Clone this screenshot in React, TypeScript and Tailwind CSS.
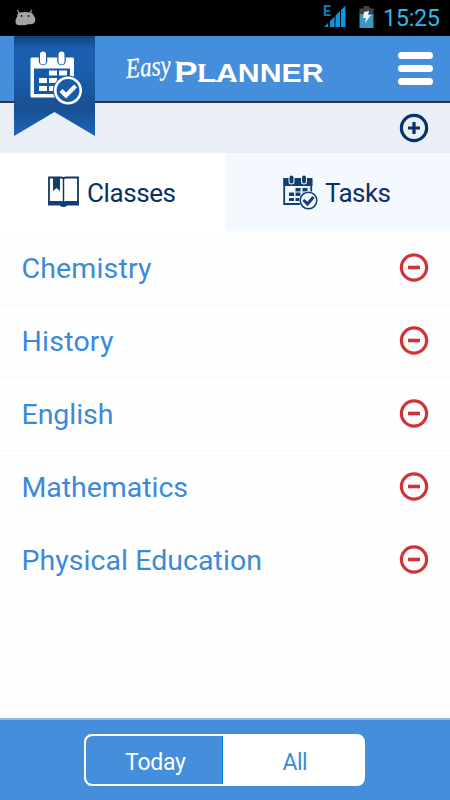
import React from "react";

const subjects = [
  { name: "Chemistry", width: "w-[131px]", length: 130 },
  { name: "History", width: "w-[93px]", length: 92 },
  { name: "English", width: "w-[93px]", length: 92 },
  { name: "Mathematics", width: "w-[167px]", length: 166.5 },
  { name: "Physical Education", width: "w-[241px]", length: 240.5 },
];

function StatusBar() {
  return (
    <div className="flex h-9 shrink-0 items-start justify-between bg-black">
      <svg className="ml-[14px] mt-[9px]" width="23" height="17" viewBox="0 0 23 17" fill="#a3a3a3">
        <path d="M3.500 1 5.500 4.500M18 1l-2 3" stroke="#a3a3a3" strokeWidth="1.200" />
        <path d="M4 4Q11 2 18 4L20 7Q22 9 21 13Q19 16 14.500 15Q11 17 7 16Q2 17 1.500 13Q1 10 3 8Z" />
        <circle cx="7.500" cy="7" r="1" fill="#222" />
        <circle cx="14.500" cy="7" r="1" fill="#222" />
      </svg>
      <div className="flex">
        <svg width="25" height="36" viewBox="0 0 25 36">
          <text x="0" y="16" fontFamily="Roboto, sans-serif" fontSize="14" fontWeight="bold" fill="#087cbd" textLength="8" lengthAdjust="spacingAndGlyphs">E</text>
          <path d="M1 27l4-4v4ZM7 21l4.500-4.500V27H7ZM12.500 15.500l4.500-4.500V27h-4.500ZM18 10l4.500-4.500V27H18Z" fill="#0797e6" />
        </svg>
        <svg className="ml-[11px]" width="16" height="36" viewBox="0 0 16 36">
          <path d="M4.500 6h6v2.500h4V14H.5V8.500h4Z" fill="#454545" />
          <path d="M.5 14h14v14H.5Z" fill="#3798c1" />
          <path d="m5 12 5-1-1 4h3l-6 8 1-5H4Z" fill="#f1f1f1" />
        </svg>
        <svg className="ml-2 mr-2" width="59" height="36">
          <text x="0" y="26.200" textLength="57" fontSize="23.500" fill="#33b5e5" fontFamily="Roboto, sans-serif">15:25</text>
        </svg>
      </div>
    </div>
  );
}

function BannerCalendar() {
  return (
    <svg width="54" height="56" viewBox="0 0 54 56">
      <rect x="2.500" y="7.500" width="43.500" height="40" rx="1.500" fill="#fff" />
      <path d="M6 18.500h36V44H6Z" fill="#165aa8" />
      <path d="M21 20.500h8v5h-8Zm10 0h8v5h-8ZM11 28h8v5h-8Zm10 0h8v5h-8Zm10 0h8v5h-8ZM11 36h8v5h-8Zm10 0h8v5h-8Z" fill="#fff" />
      <path d="M15 5v6M33.500 5v6" stroke="#185ca9" strokeWidth="8.500" strokeLinecap="round" />
      <path d="M15 4.500v7M33.500 4.500v7" stroke="#fff" strokeWidth="6" strokeLinecap="round" />
      <circle cx="40" cy="40.500" r="15" fill="#165aa8" />
      <circle cx="40" cy="40.500" r="12.700" fill="#185ca9" stroke="#fff" strokeWidth="2.600" />
      <path d="m33 40.500 5 5 9.500-9.500" fill="none" stroke="#fff" strokeWidth="4.200" />
    </svg>
  );
}

function Header() {
  return (
    <header className="relative h-[67px] shrink-0 border-b-2 border-[#373544] bg-[#458edc]">
      <div className="flex h-full items-start justify-end">
        <svg width="200" height="65" viewBox="125 36 200 65" fill="#fff" className="mr-[73px]">
          <text x="126" y="76" textLength="45" lengthAdjust="spacingAndGlyphs" fontFamily="'Liberation Serif', serif" fontStyle="italic" fontSize="28" stroke="#fff" strokeWidth=".3" transform="rotate(-5 148 70)">Easy</text>
          <text x="174.500" y="81.500" textLength="23" lengthAdjust="spacingAndGlyphs" fontFamily="'Liberation Sans', sans-serif" fontWeight="bold" fontSize="29">P</text>
          <text x="197.500" y="81.500" textLength="126" lengthAdjust="spacingAndGlyphs" fontFamily="'Liberation Sans', sans-serif" fontWeight="bold" fontSize="25.500">LANNER</text>
          <path d="M175.500 62.200h4M175.500 80.800h8M198 64.800h8M198 80.800h4M215 80.800h7M230 80.800h6" stroke="#fff" strokeWidth="1.200" />
        </svg>
        <button className="mr-[17px] mt-4 flex w-[35px] flex-col gap-[6px]" aria-label="Menu">
          <span className="h-[7px] w-full rounded-full bg-white" />
          <span className="h-[7px] w-full rounded-full bg-white" />
          <span className="h-[7px] w-full rounded-full bg-white" />
        </button>
      </div>
      <div className="absolute left-[14px] top-0 flex h-[100px] w-[81px] justify-center bg-[linear-gradient(180deg,#12427a_0%,#195fae_12%,#195fae_35%,#184f92_72%,#1c66ba_100%)] pt-[14px] [clip-path:polygon(0_0,100%_0,100%_100%,50%_76%,0_100%)]">
        <BannerCalendar />
      </div>
    </header>
  );
}

function CircleIcon({ plus = false }: { plus?: boolean }) {
  return (
    <svg width="30" height="30" viewBox="0 0 30 30" fill="none" stroke={plus ? "#06336b" : "#cf3338"}>
      <circle cx="15" cy={plus ? 15 : 14.5} r="12.600" strokeWidth="3.200" />
      <path d={plus ? "M9 15h12M15 9v12" : "M9 14.500h12"} strokeWidth={plus ? 3.2 : 3.6} />
    </svg>
  );
}

function Tabs() {
  return (
    <div className="flex h-[78px] shrink-0">
      <button className="flex w-[225px] items-start bg-white pl-[47px] pt-[23px]">
        <svg width="33" height="34" viewBox="0 0 33 34" fill="none" stroke="#123766">
          <path d="M2 1.500h12q2.500 0 2.500 1.500Q16.500 1.500 19 1.500h12v26H2Z" strokeWidth="1.800" />
          <path d="M1 25h13q2.500 0 2.500 1.500Q16.500 25 19 25h13v4.500H20q-1 1.500-3.500 1.500T13 29.500H1Z" fill="#123f70" stroke="none" />
          <path d="M6 1h7v14l-3.500-3L6 15Z" fill="#123f70" stroke="none" />
          <path d="M16.500 3v24" strokeWidth="1.500" />
        </svg>
        <svg className="ml-[7px]" width="91" height="38" fill="#0b3165">
          <text x="0" y="26" textLength="89" fontFamily="Roboto, sans-serif" fontSize="26">Classes</text>
        </svg>
      </button>
      <button className="flex w-[225px] items-start bg-[#f3f9fe] pl-[58px] pt-[22px]">
        <svg width="36" height="36" viewBox="0 0 36 36">
          <path d="M1.200 4h27v25h-27Z" fill="#f3f9fe" stroke="#123f70" strokeWidth="1.800" />
          <path d="M.5 3.500h29V11H.5Z" fill="#123f70" />
          <path d="M12.500 13h5v3.500h-5Zm7 0h5v3.500h-5ZM6 17.500h5V21H6Zm6.500 0h5V21h-5Zm7 0h5V21h-5ZM6 23h5v3H6Zm6.500 0h5v3h-5Z" fill="#123f70" />
          <path d="M8.500 2.500v4M21 2.500v4" stroke="#f3f9fe" strokeWidth="6" strokeLinecap="round" />
          <path d="M8.500 2.500v4M21 2.500v4" stroke="#123f70" strokeWidth="4" strokeLinecap="round" />
          <circle cx="25.500" cy="25.500" r="9.500" fill="#f3f9fe" />
          <circle cx="25.500" cy="25.500" r="8.300" fill="#f3f9fe" stroke="#123f70" strokeWidth="1.500" />
          <path d="m20.500 25 4 4 6-7" fill="none" stroke="#123f70" strokeWidth="3" />
        </svg>
        <svg className="ml-[6px]" width="70" height="38" fill="#0b3165">
          <text x="0" y="27" textLength="66" fontFamily="Roboto, sans-serif" fontSize="26">Tasks</text>
        </svg>
      </button>
    </div>
  );
}

export default function App() {
  return (
    <main className="flex h-[800px] w-[450px] flex-col overflow-hidden bg-[#fefefe] font-['Roboto',sans-serif]">
      <StatusBar />
      <Header />
      <div className="flex h-[50px] shrink-0 items-center justify-end bg-[#e9eff4] pr-[21px]">
        <CircleIcon plus />
      </div>
      <Tabs />
      <ul className="mt-px">
        {subjects.map(({ name, width, length }) => (
          <li key={name} className="flex h-[73px] items-center justify-between border-b border-[#f6f8fa] pl-[21px] pr-[21px]">
            <svg className={`${width} h-[44px] overflow-visible`} fill="#3b8ad9">
              <text x="0.500" y="32" textLength={length} fontFamily="Roboto, sans-serif" fontSize="28.500">{name}</text>
            </svg>
            <CircleIcon />
          </li>
        ))}
      </ul>
      <footer className="mt-auto flex h-[82px] shrink-0 border-t-2 border-[#91bce9] bg-[#458edc] pl-[84px] pt-[14px]">
        <div className="flex h-[52px] w-[281px] overflow-hidden rounded-lg border-2 border-white bg-white">
          <button className="w-[137px] rounded-l-[6px] border-r border-[#087fdc] bg-[#458edc]">
            <svg width="136" height="48" fill="#fff">
              <text x="39" y="33.500" textLength="61" fontFamily="Roboto, sans-serif" fontSize="23">Today</text>
            </svg>
          </button>
          <button className="flex-1">
            <svg width="136" height="48" fill="#3b8ad9">
              <text x="59.500" y="33.500" textLength="25" fontFamily="Roboto, sans-serif" fontSize="23">All</text>
            </svg>
          </button>
        </div>
      </footer>
    </main>
  );
}
